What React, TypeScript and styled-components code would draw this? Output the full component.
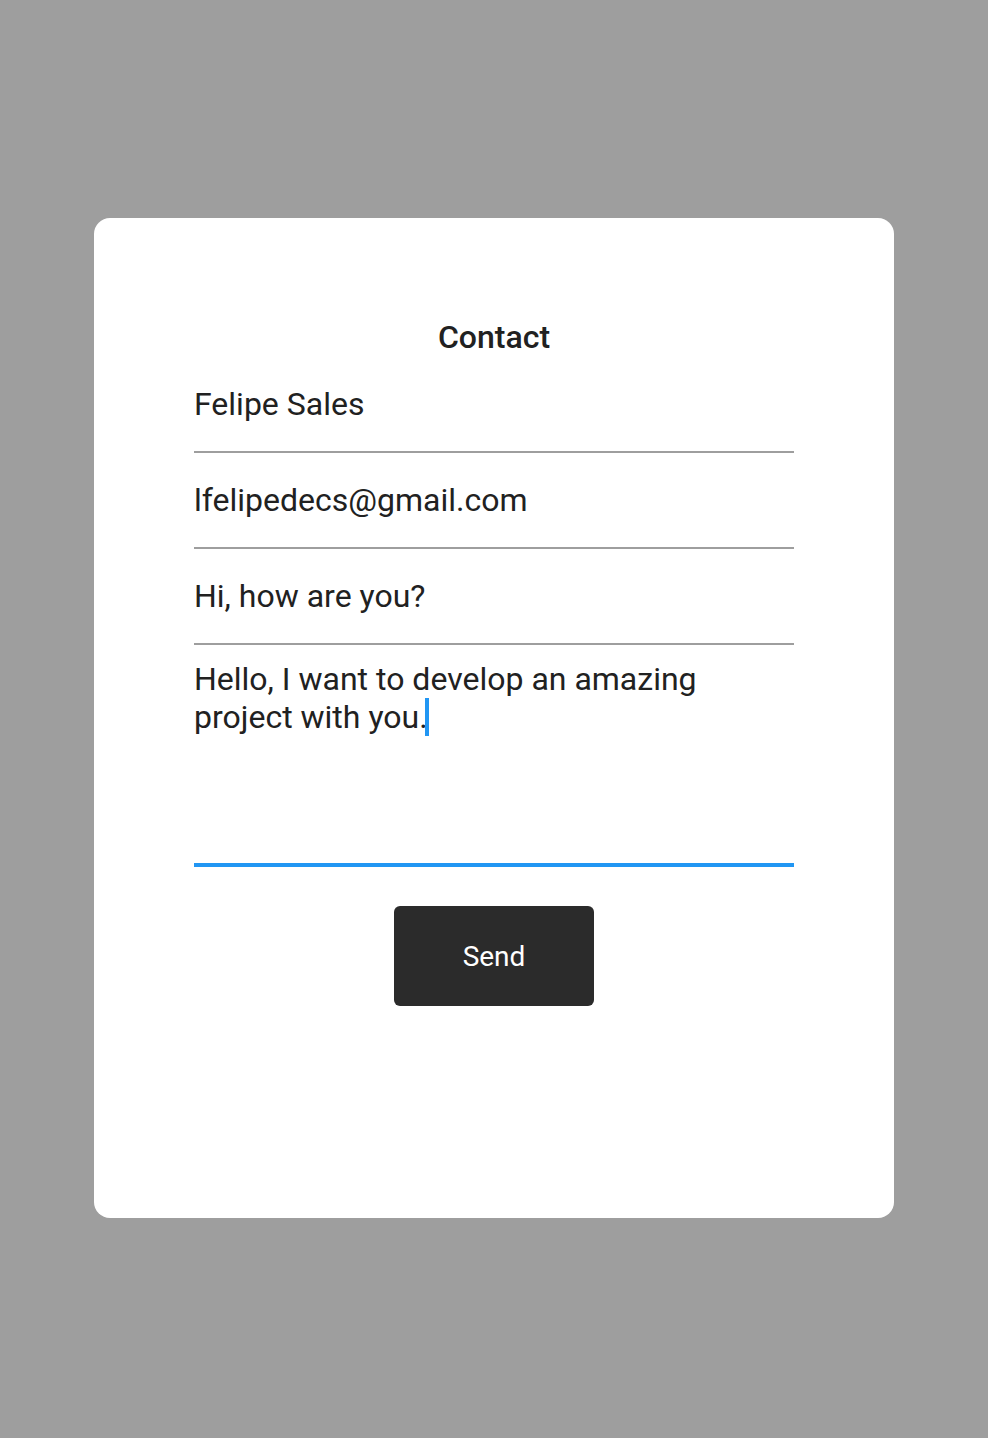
import React from "react";
import styled, { createGlobalStyle } from "styled-components";

const Global = createGlobalStyle`
  html, body { margin: 0; padding: 0; }
  body { background: #9e9e9e; font-family: Roboto, "Liberation Sans", sans-serif; }
  * { box-sizing: border-box; }
`;

const Overlay = styled.div`
  min-height: 100vh;
  padding-bottom: 2px;
  display: flex;
  align-items: center;
  justify-content: center;
  background: #9e9e9e;
`;

const Card = styled.div`
  width: 800px;
  height: 1000px;
  background: #ffffff;
  border-radius: 16px;
  padding: 100px 100px 0;
  display: flex;
  flex-direction: column;
`;

const Title = styled.h2`
  margin: 0;
  height: 39px;
  line-height: 38px;
  text-align: center;
  font-size: 32px;
  font-weight: 500;
  color: #212121;
`;

const Form = styled.form`
  display: flex;
  flex-direction: column;
`;

const Field = styled.input`
  height: 96px;
  border: none;
  border-bottom: 2px solid #9e9e9e;
  padding: 0;
  font-family: Roboto, "Liberation Sans", sans-serif;
  font-size: 32px;
  color: #212121;
  background: transparent;
  outline: none;
`;

const Area = styled.div`
  height: 222px;
  border-bottom: 4px solid #2196f3;
  padding-top: 15px;
  font-size: 32px;
  line-height: 38px;
  color: #212121;
`;

const Caret = styled.span`
  display: inline-block;
  width: 4px;
  height: 38px;
  background: #2196f3;
  vertical-align: bottom;
  margin-left: -3px;
`;

const Send = styled.button`
  align-self: center;
  margin-top: 39px;
  width: 200px;
  height: 100px;
  border: none;
  border-radius: 6px;
  background: #2b2b2b;
  color: #ffffff;
  font-family: Roboto, "Liberation Sans", sans-serif;
  font-size: 28px;
  cursor: pointer;
`;

export default function App() {
  return (
    <>
      <Global />
      <Overlay>
        <Card>
          <Title>Contact</Title>
          <Form onSubmit={(e) => e.preventDefault()}>
            <Field defaultValue="Felipe Sales" />
            <Field defaultValue="lfelipedecs@gmail.com" />
            <Field defaultValue="Hi, how are you?" />
            <Area role="textbox">
              Hello, I want to develop an amazing
              <br />
              project with you.<Caret />
            </Area>
            <Send type="submit">Send</Send>
          </Form>
        </Card>
      </Overlay>
    </>
  );
}
